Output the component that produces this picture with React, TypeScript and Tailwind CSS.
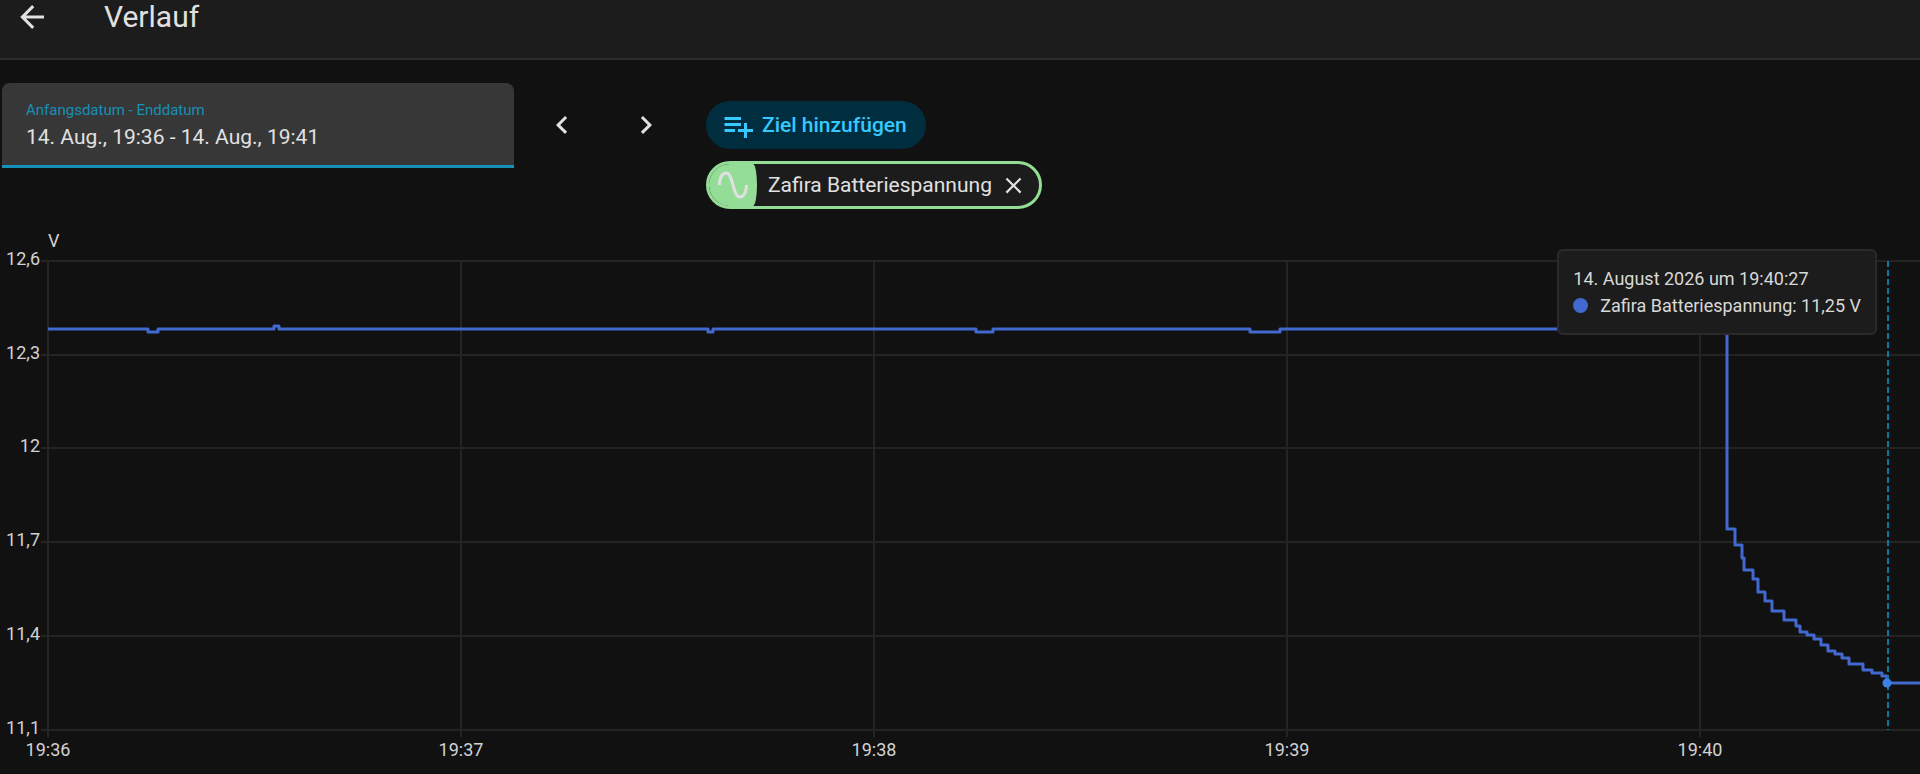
import React, { useState } from 'react';

const mdiArrowLeft = 'M20,11V13H8L13.5,18.5L12.08,19.92L4.16,12L12.08,4.08L13.5,5.5L8,11H20Z';
const mdiChevronLeft = 'M15.41,16.58L10.83,12L15.41,7.41L14,6L8,12L14,18L15.41,16.58Z';
const mdiChevronRight = 'M8.59,16.58L13.17,12L8.59,7.41L10,6L16,12L10,18L8.59,16.58Z';
const mdiPlaylistPlus =
  'M3 16H10V14H3M18 14V10H16V14H12V16H16V20H18V16H22V14M14 6H3V8H14M14 10H3V12H14V10Z';
const mdiSineWave =
  'M16.5,21C13.5,21 12.31,16.76 11.05,12.28C10.14,9.04 9,5 7.5,5C4.11,5 4,11.93 4,12H2C2,11.63 2.06,3 7.5,3C10.5,3 11.71,7.25 12.97,11.74C13.83,14.8 15,19 16.5,19C19.94,19 20.03,12.07 20.03,12H22.03C22.03,12.37 21.97,21 16.5,21Z';
const mdiClose =
  'M19,6.41L17.59,5L12,10.59L6.41,5L5,6.41L10.59,12L5,17.59L6.41,19L12,13.41L17.59,19L19,17.59L13.41,12L19,6.41Z';

interface IconProps {
  path: string;
  className?: string;
}

const Icon: React.FC<IconProps> = ({ path, className }) => (
  <svg viewBox="0 0 24 24" className={className} fill="currentColor" aria-hidden="true">
    <path d={path} />
  </svg>
);

const yTicks = [
  { label: '12,6', y: 41 },
  { label: '12,3', y: 135 },
  { label: '12', y: 228 },
  { label: '11,7', y: 322 },
  { label: '11,4', y: 416 },
  { label: '11,1', y: 510 },
];

const xTicks = [
  { label: '19:36', x: 48 },
  { label: '19:37', x: 461 },
  { label: '19:38', x: 874 },
  { label: '19:39', x: 1287 },
  { label: '19:40', x: 1700 },
];

// each entry: the value (y) holds from x until the next entry
const readings: [number, number][] = [
  [48, 109], [148, 112], [158, 109], [274, 106], [279, 109], [708, 112], [713, 109],
  [976, 112], [993, 109], [1250, 112], [1280, 109], [1727, 309], [1735, 325],
  [1742, 338], [1744, 350], [1753, 359], [1758, 372], [1765, 381], [1772, 391],
  [1784, 400], [1796, 406], [1800, 412], [1807, 415], [1814, 419], [1821, 425],
  [1828, 431], [1835, 434], [1842, 438], [1849, 444], [1863, 450], [1872, 453],
  [1882, 456], [1887, 463],
];

const linePath =
  readings.map(([x, y], i) => (i === 0 ? `M${x} ${y}` : `H${x}V${y}`)).join('') + 'H1920';

const HistoryChart: React.FC = () => (
  <div className="relative">
    <svg viewBox="0 0 1920 554" className="block w-full h-auto" role="img" aria-label="Zafira Batteriespannung">
      <g stroke="#242424" strokeWidth="2">
        {yTicks.map(t => (
          <line key={t.label} x1="41" x2="1920" y1={t.y} y2={t.y} />
        ))}
        {xTicks.map(t => (
          <line key={t.label} x1={t.x} x2={t.x} y1="41" y2="517" />
        ))}
      </g>
      <g className="text-[18px]" fill="#d2d2d2">
        <text x="48" y="27">V</text>
        {yTicks.map(t => (
          <text key={t.label} x="40" y={t.y + 4} textAnchor="end">{t.label}</text>
        ))}
        {xTicks.map(t => (
          <text key={t.label} x={t.x} y="536" textAnchor="middle">{t.label}</text>
        ))}
      </g>
      <path d={linePath} fill="none" stroke="#4269d0" strokeWidth="3" strokeLinejoin="round" />
      <line x1="1888" x2="1888" y1="41" y2="510" stroke="#0b76a0" strokeWidth="2" strokeDasharray="6 3" />
      <circle cx="1887" cy="463" r="4.5" fill="#3b82e8" />
    </svg>
    <div className="absolute right-[43px] top-[29px] h-[86px] rounded-md border-2 border-[#2a2a2a] bg-[#1c1c1c] px-[14px] pt-[14px] text-[18px] leading-[27px] text-[#d8d8d8]">
      <div>14. August 2026 um 19:40:27</div>
      <div className="flex items-center">
        <span className="mr-3 size-[15px] rounded-full bg-[#4269d0]" />
        Zafira Batteriespannung: 11,25 V
      </div>
    </div>
  </div>
);

const App: React.FC = () => {
  const [range, setRange] = useState('14. Aug., 19:36 - 14. Aug., 19:41');
  const [showTarget, setShowTarget] = useState(true);

  return (
    <div className="min-h-screen overflow-hidden bg-[#111111] font-[Roboto,sans-serif] text-[#e1e1e1]">
      <header className="flex h-[60px] items-start border-b-2 border-[#2b2b2b] bg-[#1c1c1c] pl-[14px]">
        <button type="button" aria-label="Zurück" className="-mt-px">
          <Icon path={mdiArrowLeft} className="size-9" />
        </button>
        <h1 className="ml-[54px] text-[30px] leading-[34px]">Verlauf</h1>
      </header>

      <div className="flex h-[160px] items-start pl-[2px] pt-[23px]">
        <div className="h-[85px] w-[512px] rounded-t-lg border-b-[3px] border-[#1590b8] bg-[#373737] px-6 pt-4">
          <label htmlFor="range" className="block text-[15px] leading-[22px] text-[#1590b8]">
            Anfangsdatum - Enddatum
          </label>
          <input
            id="range"
            value={range}
            onChange={e => setRange(e.target.value)}
            className="block w-full bg-transparent text-[21px] leading-[32px] outline-none"
          />
        </div>

        <div className="ml-[18px] mt-3 flex gap-6">
          <button type="button" aria-label="Früher" className="flex size-[60px] items-center justify-center">
            <Icon path={mdiChevronLeft} className="size-9" />
          </button>
          <button type="button" aria-label="Später" className="flex size-[60px] items-center justify-center">
            <Icon path={mdiChevronRight} className="size-9" />
          </button>
        </div>

        <div className="ml-[30px] mt-[18px] flex flex-col items-start gap-3">
          <button
            type="button"
            className="flex h-12 items-center rounded-full bg-[#002e3e] pl-[14px] pr-[19px] pt-px text-[21px] font-medium text-[#37c8fd]"
          >
            <Icon path={mdiPlaylistPlus} className="mr-[6px] size-9" />
            Ziel hinzufügen
          </button>
          {showTarget && (
            <div className="flex h-12 items-center overflow-hidden rounded-full border-[3px] border-[#93dd96] bg-[#1c1c1c] pr-3 text-[21px]">
              <span className="flex h-full w-12 items-center justify-center bg-[#93dd96] [border-radius:0_4px_4px_0/0_50%_50%_0]">
                <Icon path={mdiSineWave} className="size-9" />
              </span>
              <span className="ml-[11px] pt-px">Zafira Batteriespannung</span>
              <button type="button" aria-label="Entfernen" className="ml-2" onClick={() => setShowTarget(false)}>
                <Icon path={mdiClose} className="size-[27px]" />
              </button>
            </div>
          )}
        </div>
      </div>

      <HistoryChart />
    </div>
  );
};

export default App;
